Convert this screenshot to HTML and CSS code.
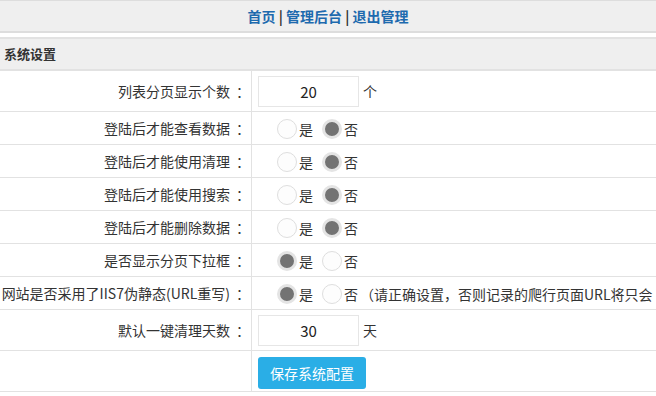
FILE: index.html
```html
<!DOCTYPE html>
<html lang="zh-CN">
<head>
    <meta charset="UTF-8">
    <title>系统设置</title>
    <link rel="stylesheet" href="styles.css">
</head>
<body>
    <div class="nav">
        <a href="#">首页</a> | <a href="#">管理后台</a> | <a href="#">退出管理</a>
    </div>

    <div class="box-title">系统设置</div>

    <table class="form-table">
        <tr class="tall">
            <td class="label">列表分页显示个数<span class="colon">：</span></td>
            <td class="field"><span class="num">20</span><span class="unit">个</span></td>
        </tr>
        <tr>
            <td class="label">登陆后才能查看数据<span class="colon">：</span></td>
            <td class="field"><span class="radio"></span><span class="opt">是</span><span class="radio on"></span><span class="opt">否</span></td>
        </tr>
        <tr>
            <td class="label">登陆后才能使用清理<span class="colon">：</span></td>
            <td class="field"><span class="radio"></span><span class="opt">是</span><span class="radio on"></span><span class="opt">否</span></td>
        </tr>
        <tr>
            <td class="label">登陆后才能使用搜索<span class="colon">：</span></td>
            <td class="field"><span class="radio"></span><span class="opt">是</span><span class="radio on"></span><span class="opt">否</span></td>
        </tr>
        <tr>
            <td class="label">登陆后才能删除数据<span class="colon">：</span></td>
            <td class="field"><span class="radio"></span><span class="opt">是</span><span class="radio on"></span><span class="opt">否</span></td>
        </tr>
        <tr>
            <td class="label">是否显示分页下拉框<span class="colon">：</span></td>
            <td class="field"><span class="radio on"></span><span class="opt">是</span><span class="radio"></span><span class="opt">否</span></td>
        </tr>
        <tr>
            <td class="label">网站是否采用了IIS7伪静态(URL重写)<span class="colon">：</span></td>
            <td class="field"><span class="radio on"></span><span class="opt">是</span><span class="radio"></span><span class="opt">否</span><span class="tip">（请正确设置，否则记录的爬行页面URL将只会</span></td>
        </tr>
        <tr class="tall">
            <td class="label">默认一键清理天数<span class="colon">：</span></td>
            <td class="field"><span class="num">30</span><span class="unit">天</span></td>
        </tr>
        <tr class="tall">
            <td class="label"></td>
            <td class="field"><button class="btn">保存系统配置</button></td>
        </tr>
    </table>
</body>
</html>
```

FILE: styles.css
```css
body{
    margin: 0;
    font-family: "Noto Sans CJK SC", "Microsoft YaHei", sans-serif;
    font-size: 14px;
    color: #333;
    overflow: hidden;
    white-space: nowrap;
}
.nav{
    background-color: #efefef;
    border-top: 1px solid #ddd;
    border-bottom: 2px solid #ddd;
    height: 30px;
    line-height: 30px;
    text-align: center;
    font-weight: bold;
    color: #333;
}
.nav a{
    color: #1d6aae;
    text-decoration: none;
}
.box-title{
    margin-top: 4px;
    background-color: #efefef;
    border-top: 2px solid #e2e2e2;
    border-bottom: 2px solid #e2e2e2;
    height: 30px;
    line-height: 30px;
    padding-left: 4px;
    font-size: 13px;
    font-weight: bold;
}
.form-table{
    width: 100%;
    border-collapse: collapse;
    table-layout: fixed;
}
.form-table td{
    border-bottom: 1px solid #e2e2e2;
    height: 32px;
    padding: 0;
}
.form-table tr.tall td{
    height: 40px;
}
.label{
    width: 243px;
    text-align: right;
    padding-right: 8px !important;
    border-right: 1px solid #e2e2e2;
}
/* SC font puts the colon at the left of its box, YaHei centres it */
.colon{
    margin-left: 6px;
    margin-right: -7px;
}
.field{
    padding-left: 6px !important;
}
.num{
    display: inline-block;
    vertical-align: middle;
    width: 99px;
    height: 29px;
    line-height: 29px;
    border: 1px solid #e6e6e6;
    text-align: center;
    font-size: 15px;
    color: #222;
}
.unit{
    vertical-align: middle;
    margin-left: 4px;
}
.radio{
    display: inline-block;
    vertical-align: middle;
    box-sizing: border-box;
    width: 20px;
    height: 20px;
    border-radius: 50%;
    border: 1px solid #dedede;
    background-color: #fdfdfd;
    margin-left: 19px;
}
.opt + .radio{
    margin-left: 9px;
}
.radio.on{
    border: 3px solid #e4e4e4;
    background-color: #737373;
}
.opt{
    vertical-align: middle;
    margin-left: 2px;
}
.tip{
    vertical-align: middle;
    margin-left: 2px;
}
.btn{
    border: none;
    border-radius: 3px;
    background-color: #2aaee6;
    color: white;
    width: 108px;
    height: 32px;
    font-family: inherit;
    font-size: 14px;
    margin-top: 3px;
    vertical-align: middle;
}
```
